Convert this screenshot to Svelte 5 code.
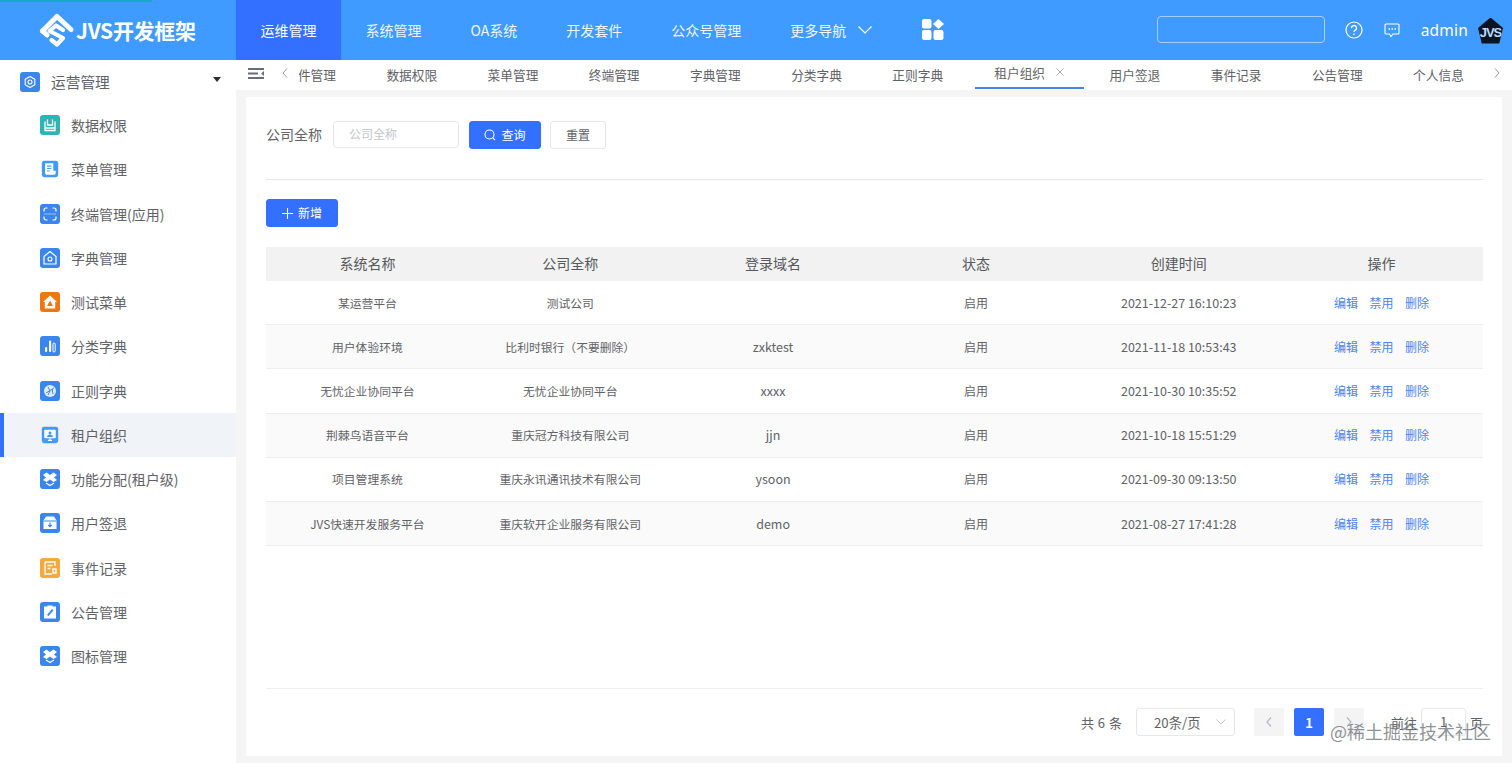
<script>
  const nav = ['运维管理', '系统管理', 'OA系统', '开发套件', '公众号管理'];
  const icons = {
    print: '<path d="M5 6.500V15.500h10V6.500M7.500 4.500v5.500h5V4.500M5 13h10" fill="none" stroke="#fff" stroke-width="1.300"/>',
    doc: '<path d="M4 3h10v9h3v3a2 2 0 0 1-2 2H6a2 2 0 0 1-2-2z" fill="#fff"/><path d="M6.500 6.500h5M6.500 9.500h5M6.500 12.500h3" stroke="#3f9bff" stroke-width="1.300"/>',
    scan: '<path d="M4 7.500V6a2 2 0 0 1 2-2h1.500M12.500 4H14a2 2 0 0 1 2 2v1.500M16 12.500V14a2 2 0 0 1-2 2h-1.500M7.500 16H6a2 2 0 0 1-2-2v-1.500" fill="none" stroke="#fff" stroke-width="1.200"/><path d="M4 10h12" stroke="#fff" stroke-width=".8" opacity=".6"/>',
    home: '<path d="M10 3.500 16 8.500V16H4V8.500z" fill="none" stroke="#fff" stroke-width="1.200" stroke-linejoin="round"/><circle cx="10" cy="11" r="2" fill="none" stroke="#fff" stroke-width="1.100"/>',
    warn: '<path d="M10 3.500 17 10h-1.800v6.500H4.800V10H3z" fill="#fff"/><path d="M10 8.500l3 5.500H7z" fill="#f0760f"/>',
    bars: '<rect x="5" y="11" width="2.200" height="5" rx="1.100" fill="#fff"/><rect x="9" y="4.500" width="2.200" height="11.500" rx="1.100" fill="#fff"/><rect x="13" y="7" width="2.200" height="9" rx="1.100" fill="none" stroke="#fff" stroke-width="1"/>',
    globe: '<circle cx="10" cy="10" r="6" fill="#fff" opacity=".85"/><path d="M6 12 14 7M8 6l2 4-2 4M12 8l1 5" fill="none" stroke="#3a86ee" stroke-width="1"/>',
    screen: '<rect x="3" y="3.500" width="14" height="10.500" rx="1" fill="#fff"/><path d="M7.500 16.500h5M10 14v2.500" stroke="#fff" stroke-width="1.400"/><circle cx="10" cy="7.500" r="1.800" fill="#3f9bff"/><path d="M6.500 12.500a3.500 3 0 0 1 7 0z" fill="#3f9bff"/>',
    box: '<path d="M6.500 3.500 10 6l3.500-2.500L17 6l-3 2.500 3 2.500-3.500 2L10 10.500 6.500 13 3 11l3-2.500L3 6z" fill="#fff"/><path d="M6 14l4 2.500 4-2.500" fill="none" stroke="#fff" stroke-width="1.300"/>',
    archive: '<path d="M6 3.500h8l2.500 4V16H3.500V7.500z" fill="#fff"/><path d="M3.500 8h13" stroke="#3a86ee" stroke-width="1"/><path d="M10 9.500v4M8.300 12l1.700 1.700 1.700-1.700" fill="none" stroke="#3a86ee" stroke-width="1.200"/>',
    record: '<path d="M5 4h10v4M5 4v12h7M7.500 7.500h5M7.500 10.500h3M13 11h3v4h-3z" fill="none" stroke="#fff" stroke-width="1.300"/>',
    edit: '<rect x="4" y="4.500" width="12" height="12" fill="#fff"/><path d="M7.500 3.500h5v2h-5z" fill="#fff"/><path d="M7 13l5-6 1.500 1.200-5 5.800zM7 14.500h7" fill="#3a86ee"/>'
  };
  const menu = [
    ['数据权限', 'print', '#2db5b3'], ['菜单管理', 'doc', '#3f9bff', true], ['终端管理(应用)', 'scan', '#3a86ee'],
    ['字典管理', 'home', '#3a86ee'], ['测试菜单', 'warn', '#f0760f'], ['分类字典', 'bars', '#3a86ee'],
    ['正则字典', 'globe', '#3a86ee'], ['租户组织', 'screen', '#3f9bff', true], ['功能分配(租户级)', 'box', '#3a86ee'],
    ['用户签退', 'archive', '#3a86ee'], ['事件记录', 'record', '#f5a93b'], ['公告管理', 'edit', '#3a86ee'], ['图标管理', 'box', '#3a86ee']
  ];
  const tabs = ['组件管理', '数据权限', '菜单管理', '终端管理', '字典管理', '分类字典', '正则字典', '租户组织', '用户签退', '事件记录', '公告管理', '个人信息'];
  const cols = ['系统名称', '公司全称', '登录域名', '状态', '创建时间', '操作'];
  const rows = [
    ['某运营平台', '测试公司', '', '2021-12-27 16:10:23'],
    ['用户体验环境', '比利时银行（不要删除）', 'zxktest', '2021-11-18 10:53:43'],
    ['无忧企业协同平台', '无忧企业协同平台', 'xxxx', '2021-10-30 10:35:52'],
    ['荆棘鸟语音平台', '重庆冠方科技有限公司', 'jjn', '2021-10-18 15:51:29'],
    ['项目管理系统', '重庆永讯通讯技术有限公司', 'ysoon', '2021-09-30 09:13:50'],
    ['JVS快速开发服务平台', '重庆软开企业服务有限公司', 'demo', '2021-08-27 17:41:28']
  ];
</script>

<div class="page">
  <div class="progress"></div>
  <header class="top">
    <div class="logo">
      <svg width="35" height="35" viewBox="0 0 35 35">
        <path d="M3.500 18 18 3.500 32 16.500" fill="none" stroke="#fff" stroke-width="5" stroke-linecap="round" stroke-linejoin="round"/>
        <path d="M3.500 18l4.500 4" fill="none" stroke="#fff" stroke-width="5" stroke-linecap="round"/>
        <path d="M24 17 17 12.500 10.500 18 24 25 18 31.500 12.500 27" fill="none" stroke="#fff" stroke-width="4.200" stroke-linecap="round" stroke-linejoin="round"/>
      </svg>
      <span class="logotext">JVS开发框架</span>
    </div>
    <nav class="nav">
      {#each nav as n, i}
        <div class="navitem" class:on={i === 0}>{n}</div>
      {/each}
      <div class="navitem more">更多导航
        <svg width="14" height="8" viewBox="0 0 14 8"><path d="M.5.5 7 7 13.500.5" fill="none" stroke="#fff" stroke-width="1.200"/></svg>
      </div>
      <svg class="apps" width="22" height="21" viewBox="0 0 22 21" fill="#fff">
        <rect x="0" y="0" width="9.500" height="9.500" rx="2"/>
        <path d="M16.500 0 22 5l-5.500 5L11 5z"/>
        <rect x="0" y="11" width="9.500" height="10" rx="2"/>
        <rect x="11.500" y="11" width="10" height="10" rx="2"/>
      </svg>
    </nav>
    <div class="tools">
      <div class="search"></div>
      <svg class="help" width="18" height="18" viewBox="0 0 18 18"><circle cx="9" cy="9" r="8" fill="none" stroke="#fff" stroke-width="1.200"/><path d="M6.500 7a2.500 2.500 0 1 1 3.500 2.300c-.7.4-1 .8-1 1.700M9 12.500v1.500" fill="none" stroke="#fff" stroke-width="1.300"/></svg>
      <svg class="msg" width="16" height="15" viewBox="0 0 16 15"><path d="M2 1h12a1 1 0 0 1 1 1v8a1 1 0 0 1-1 1H9l-2 2.500L5.500 11H2a1 1 0 0 1-1-1V2a1 1 0 0 1 1-1z" fill="none" stroke="#fff" stroke-width="1.100"/><path d="M4.500 6h1.500M7.500 6H9M10.500 6H12" stroke="#fff" stroke-width="1.300"/></svg>
      <span class="admin">admin</span>
      <div class="avatar">JVS</div>
    </div>
  </header>

  <div class="body">
    <aside class="side">
      <div class="group">
        <span class="ico ico-top">
          <svg width="20" height="20" viewBox="0 0 20 20"><path d="M10 4.500 14.800 7.200v5.600L10 15.500l-4.800-2.700V7.200z" fill="none" stroke="#fff" stroke-width="1.100" stroke-linejoin="round"/><circle cx="10" cy="10" r="2" fill="none" stroke="#fff" stroke-width="1.100"/></svg>
        </span>
        <span class="grouplabel">运营管理</span>
        <span class="caret"></span>
      </div>
      {#each menu as m}
        <div class="item" class:cur={m[0] === '租户组织'}>
          <span class="ico" class:small={m[3]} style="background:{m[2]}">
            <svg width="20" height="20" viewBox="0 0 20 20">{@html icons[m[1]]}</svg>
          </span>
          <span>{m[0]}</span>
        </div>
      {/each}
    </aside>

    <main class="main">
      <div class="tabbar">
        <svg class="fold" width="16" height="11" viewBox="0 0 16 11"><path d="M0 1h16M0 5.500h10M0 10h16" stroke="#666e7a" stroke-width="1.800"/><path d="M16 3 13 5.500 16 8z" fill="#666e7a"/></svg>
        <svg class="chev" width="6" height="10" viewBox="0 0 6 10"><path d="M5 .5 1 5l4 4.500" fill="none" stroke="#999" stroke-width="1"/></svg>
        <div class="tabs">
          {#each tabs as t}
            <div class="tab" class:act={t === '租户组织'}>
              <span>{t}</span>
              {#if t === '租户组织'}<svg class="x" width="8" height="8" viewBox="0 0 8 8"><path d="M.5.5l7 7M7.500.5l-7 7" stroke="#aaa" stroke-width="1"/></svg>{/if}
            </div>
          {/each}
        </div>
        <svg class="chev" width="6" height="10" viewBox="0 0 6 10"><path d="M1 .5 5 5 1 9.500" fill="none" stroke="#999" stroke-width="1"/></svg>
      </div>

      <div class="content">
        <section class="card">
          <div class="filter">
            <span class="flabel">公司全称</span>
            <div class="finput">公司全称</div>
            <button class="btn primary query">
              <svg width="12" height="12" viewBox="0 0 12 12"><circle cx="5.500" cy="5.500" r="4.500" fill="none" stroke="#fff" stroke-width="1.100"/><path d="M9 9l2 2" stroke="#fff" stroke-width="1.100"/></svg>
              查询
            </button>
            <button class="btn reset">重置</button>
          </div>
          <div class="divider"></div>
          <button class="btn primary add">
            <svg width="11" height="11" viewBox="0 0 11 11"><path d="M5.500 0v11M0 5.500h11" stroke="#fff" stroke-width="1.100"/></svg>
            新增
          </button>
          <div class="table">
            <div class="tr th">
              {#each cols as c}<div class="cell">{c}</div>{/each}
            </div>
            {#each rows as r, i}
              <div class="tr td" class:even={i % 2 === 1}>
                <div class="cell">{r[0]}</div>
                <div class="cell">{r[1]}</div>
                <div class="cell dom">{r[2]}</div>
                <div class="cell">启用</div>
                <div class="cell time">{r[3]}</div>
                <div class="cell ops"><span>编辑</span><span>禁用</span><span>删除</span></div>
              </div>
            {/each}
          </div>
          <footer class="pager">
            <span class="total">共 6 条</span>
            <div class="sizes">20条/页
              <svg width="10" height="6" viewBox="0 0 10 6"><path d="M.5.500 5 5 9.500.5" fill="none" stroke="#c0c4cc" stroke-width="1"/></svg>
            </div>
            <div class="pg off"><svg width="6" height="10" viewBox="0 0 6 10"><path d="M5 .5 1 5l4 4.500" fill="none" stroke="#b5b8bd" stroke-width="1.200"/></svg></div>
            <div class="pg cur">1</div>
            <div class="pg off"><svg width="6" height="10" viewBox="0 0 6 10"><path d="M1 .5 5 5 1 9.500" fill="none" stroke="#b5b8bd" stroke-width="1.200"/></svg></div>
            <span class="goto">前往</span>
            <div class="jump">1</div>
            <span class="ye">页</span>
          </footer>
        </section>
      </div>
    </main>
  </div>
  <div class="mark">@稀土掘金技术社区</div>
</div>

<style>
  :global(body) { margin: 0; }
  .page {
    position: relative;
    height: 763px;
    overflow: hidden;
    display: flex;
    flex-direction: column;
    font-family: "Noto Sans CJK SC", "Noto Sans", sans-serif;
    font-size: 14px;
    color: #5f6267;
    background: #f5f5f5;
  }
  .progress { position: absolute; left: 0; top: 0; width: 152px; height: 2px; background: #1ba8c8; z-index: 2; }
  .top { height: 60px; flex: none; display: flex; background: #3f9bff; color: #fff; }
  .logo { width: 236px; flex: none; display: flex; align-items: center; gap: 2px; padding-left: 39px; box-sizing: border-box; }
  .logotext { font-size: 21px; font-weight: 700; letter-spacing: -.3px; line-height: 1; white-space: nowrap; }
  .nav { display: flex; align-items: stretch; flex: 1; }
  .navitem { padding: 0 24.500px; display: flex; align-items: center; white-space: nowrap; color: #eef6ff; }
  .navitem.on { background: #3370ff; width: 105px; box-sizing: border-box; color: #fff; }
  .more { gap: 12px; }
  .apps { align-self: center; margin-left: 25px; margin-top: -1px; }
  .tools { display: flex; align-items: center; padding-right: 9px; }
  .search { width: 168px; height: 27px; box-sizing: border-box; border: 1px solid #a4cfff; border-radius: 4px; margin-bottom: 1px; }
  .help { margin-left: 20px; }
  .msg { margin-left: 21px; }
  .admin { font: 15.500px "Noto Sans", sans-serif; margin-left: 21px; letter-spacing: .2px; }
  .avatar {
    width: 25px; height: 26px; margin-left: 10px; margin-top: 1px; background: #0c1422; color: #b9dcff;
    font: 700 13px/29px "Liberation Sans", sans-serif; letter-spacing: -1px; text-align: center;
    clip-path: polygon(50% 0, 100% 40%, 85% 100%, 15% 100%, 0 40%);
  }
  .body { flex: 1; display: flex; min-height: 0; }
  .side { width: 236px; flex: none; background: #fff; }
  .group { height: 43px; display: flex; align-items: center; padding: 0 15px 0 20px; gap: 11px; font-size: 14.700px; }
  .grouplabel { flex: 1; }
  .caret { width: 0; height: 0; border: 4.500px solid transparent; border-top: 5px solid #2c2f33; border-bottom: 0; margin-top: -4px; }
  .item { height: 44.250px; display: flex; align-items: center; gap: 11px; padding-left: 40px; box-sizing: border-box; white-space: nowrap; }
  .item.cur { background: #f0f3f8; box-shadow: inset 4px 0 0 #3370ff; }
  .ico { width: 20px; height: 20px; flex: none; border-radius: 3px; background: #3a86ee; display: block; }
  .ico svg { display: block; }
  .ico.small { transform: scale(.82); }
  .main { flex: 1; min-width: 0; display: flex; flex-direction: column; }
  .tabbar { height: 30px; flex: none; background: #fff; display: flex; align-items: center; padding-left: 12px; font-size: 12.700px; }
  .fold { flex: none; margin-right: 18px; margin-top: -3px; }
  .chev { flex: none; margin-top: -4px; }
  .tabs { width: 1176px; margin-left: 11px; margin-right: 19px; height: 30px; overflow: hidden; display: flex; flex: none; }
  .tab { flex: none; height: 29px; width: 101.200px; display: flex; align-items: center; justify-content: center; padding-bottom: 1px; box-sizing: border-box; position: relative; white-space: nowrap; }
  .tab:first-child { margin-left: -39px; }
  .tab.act { width: 109px; border-bottom: 2px solid #3f86e8; margin-left: 7px; justify-content: flex-start; padding-left: 19px; padding-bottom: 3px; color: #666; }
  .x { position: absolute; right: 20px; top: 8px; }
  .content { flex: 1; padding: 7px 10px 7px 10px; min-height: 0; display: flex; }
  .card { flex: 1; background: #fff; padding: 24px 19px 20px 20px; display: flex; flex-direction: column; min-width: 0; }
  .filter { display: flex; align-items: flex-start; height: 28px; }
  .flabel { line-height: 26px; width: 67px; flex: none; }
  .finput { width: 126px; height: 27px; box-sizing: border-box; border: 1px solid #e4e7ed; border-radius: 4px; padding-left: 15px; font-size: 12px; line-height: 24px; color: #c4c7cc; }
  .btn { height: 28px; box-sizing: border-box; border-radius: 3px; font: 12px/1 "Noto Sans CJK SC", sans-serif; padding: 0; display: flex; align-items: center; justify-content: center; }
  .primary { background: #3370ff; border: 1px solid #3370ff; color: #fff; width: 72px; gap: 5px; }
  .query { margin-left: 10px; }
  .reset { margin-left: 9px; width: 56px; background: #fff; border: 1px solid #e4e7ed; color: #606266; }
  .divider { height: 1px; background: #e3e5e8; margin-top: 30px; flex: none; }
  .add { margin-top: 19px; flex: none; }
  .table { margin-top: 20px; }
  .tr { display: grid; grid-template-columns: repeat(6, 1fr); align-items: center; text-align: center; }
  .th { height: 34px; background: #f2f2f2; color: #55585c; padding-bottom: 3px; box-sizing: border-box; }
  .td { height: 44.200px; box-sizing: border-box; border-bottom: 1px solid #eceef2; padding-bottom: 1px; font-size: 11.800px; }
  .even { background: #fafafa; }
  .dom, .time { font-size: 12.500px; }
  .td .cell:nth-child(4) { font-size: 12px; }
  .ops { display: flex; justify-content: center; gap: 11.500px; color: #4d84ef; font-size: 12px; }
  .pager { margin-top: auto; border-top: 1px solid #eceef2; padding-top: 19px; display: flex; align-items: center; font-size: 13px; color: #5f6267; }
  .total { margin-left: auto; margin-right: 14px; word-spacing: 1px; }
  .sizes { width: 99px; height: 28px; box-sizing: border-box; border: 1px solid #e4e7ed; border-radius: 3px; display: flex; align-items: center; justify-content: space-between; padding: 0 8px 0 17px; margin-right: 19px; font-size: 13.300px; }
  .pg { width: 30px; height: 28px; border-radius: 2px; display: flex; align-items: center; justify-content: center; margin-right: 10px; font-weight: 700; }
  .pg.off { background: #f4f4f5; }
  .pg.cur { background: #3370ff; color: #fff; }
  .goto { margin-left: 17px; margin-right: 4px; }
  .jump { width: 45px; height: 28px; box-sizing: border-box; border: 1px solid #e4e7ed; border-radius: 3px; text-align: center; line-height: 26px; margin-right: 4px; }
  .mark { position: absolute; left: 1330px; top: 717px; font-size: 18px; line-height: 28px; color: rgba(105, 110, 115, .75); white-space: nowrap; }
</style>
